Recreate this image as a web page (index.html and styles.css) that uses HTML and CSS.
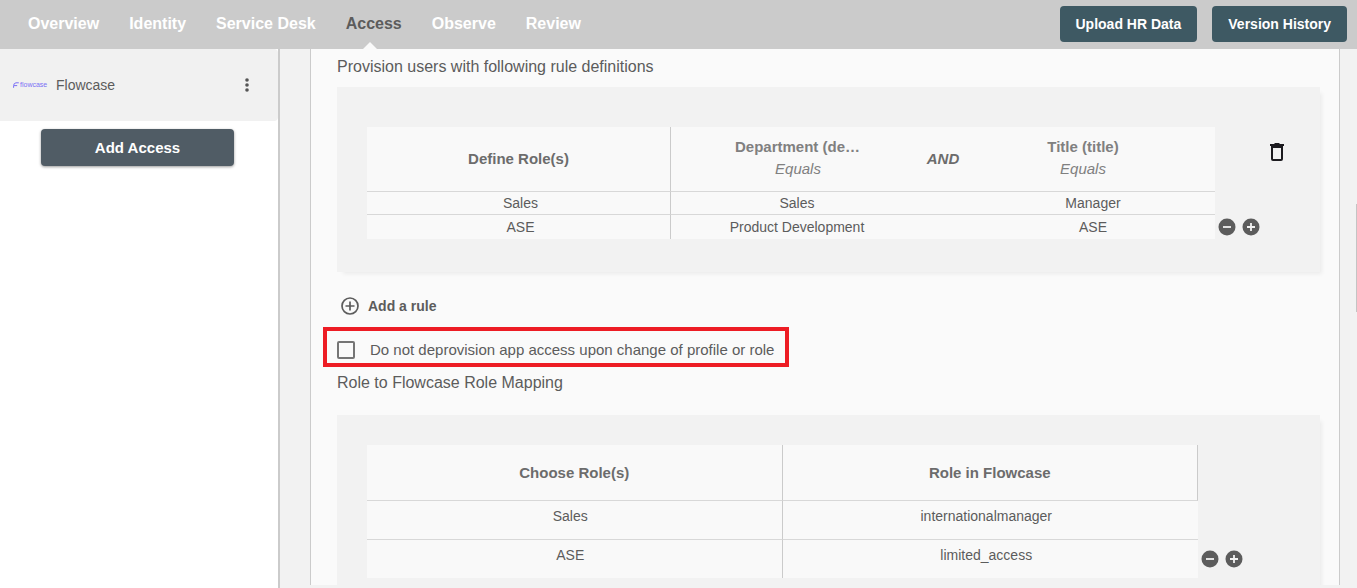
FILE: index.html
```html
<!DOCTYPE html>
<html lang="en">
<head>
<meta charset="utf-8">
<title>Access</title>
<link rel="stylesheet" href="styles.css">
</head>
<body>
<svg class="defs" aria-hidden="true">
  <symbol id="minus" viewBox="0 0 18 18"><circle cx="9" cy="9" r="8.5" fill="#5c5c5c"/><path d="M5 9h8" stroke="#f2f2f2" stroke-width="1.8"/></symbol>
  <symbol id="plus" viewBox="0 0 18 18"><circle cx="9" cy="9" r="8.5" fill="#5c5c5c"/><path d="M5 9h8M9 5v8" stroke="#f2f2f2" stroke-width="1.8"/></symbol>
</svg>
<header class="topbar">
  <nav class="tabs">
    <a class="tab" href="#overview">Overview</a>
    <a class="tab" href="#identity">Identity</a>
    <a class="tab" href="#service-desk">Service Desk</a>
    <a class="tab active" href="#access" aria-current="page">Access</a>
    <a class="tab" href="#observe">Observe</a>
    <a class="tab" href="#review">Review</a>
  </nav>
  <div class="topbar-actions">
    <button class="top-button" type="button">Upload HR Data</button>
    <button class="top-button" type="button">Version History</button>
  </div>
</header>
<div class="layout">
  <aside class="sidebar">
    <div class="app-item">
      <span class="logo"><svg width="6" height="6" viewBox="0 0 6 6" aria-hidden="true"><path d="M.6 5.8V3.500Q.8 1 3 .8h2.800M1 3.600h3.200" fill="none" stroke="#7b70f5"/></svg><span class="logo-text">flowcase</span></span>
      <span class="app-name">Flowcase</span>
      <button class="icon-button" type="button" aria-label="More options"><svg width="16" height="16" viewBox="0 0 16 16"><circle cx="8" cy="3" r="1.800" fill="#555"/><circle cx="8" cy="8" r="1.800" fill="#555"/><circle cx="8" cy="13" r="1.800" fill="#555"/></svg></button>
    </div>
    <button class="add-access" type="button">Add Access</button>
  </aside>
  <main class="content">
    <section class="panel">
      <h2 class="section-title">Provision users with following rule definitions</h2>
      <div class="card rules-card">
        <table class="rules">
          <colgroup><col class="col-role"><col><col class="col-join"><col></colgroup>
          <thead>
            <tr>
              <th>Define Role(s)</th>
              <th class="condition"><span class="field">Department (department)</span><span class="operator">Equals</span></th>
              <th class="join">AND</th>
              <th class="condition last"><span class="field">Title (title)</span><span class="operator">Equals</span></th>
            </tr>
          </thead>
          <tbody>
            <tr><td>Sales</td><td>Sales</td><td></td><td>Manager</td></tr>
            <tr><td>ASE</td><td>Product Development</td><td></td><td>ASE</td></tr>
          </tbody>
        </table>
        <div class="row-actions">
          <button class="icon-button" type="button" aria-label="Remove row"><svg width="18" height="18"><use href="#minus"/></svg></button>
          <button class="icon-button" type="button" aria-label="Add row"><svg width="18" height="18"><use href="#plus"/></svg></button>
        </div>
        <button class="icon-button delete" type="button" aria-label="Delete rule"><svg width="16" height="20" viewBox="0 0 16 20"><path d="M1 2h4l1-1h4l1 1h4v2H1z" fill="#1c1b1f"/><path d="M3 5h10v12q0 1-1 1H4q-1 0-1-1z" fill="none" stroke="#1c1b1f" stroke-width="2"/></svg></button>
      </div>
      <button class="add-rule" type="button"><svg width="18" height="18" viewBox="0 0 18 18" aria-hidden="true"><circle cx="9" cy="9" r="8" fill="none" stroke="#5c5c5c" stroke-width="1.700"/><path d="M4.500 9h9M9 4.500v9" stroke="#5c5c5c" stroke-width="1.700"/></svg>Add a rule</button>
      <label class="deprovision"><input class="checkbox" type="checkbox">Do not deprovision app access upon change of profile or role</label>
      <h2 class="section-title">Role to Flowcase Role Mapping</h2>
      <div class="card mapping-card">
        <table class="mapping">
          <thead><tr><th>Choose Role(s)</th><th>Role in Flowcase</th></tr></thead>
          <tbody>
            <tr><td>Sales</td><td>internationalmanager</td></tr>
            <tr><td>ASE</td><td>limited_access</td></tr>
          </tbody>
        </table>
        <div class="row-actions">
          <button class="icon-button" type="button" aria-label="Remove mapping"><svg width="18" height="18"><use href="#minus"/></svg></button>
          <button class="icon-button" type="button" aria-label="Add mapping"><svg width="18" height="18"><use href="#plus"/></svg></button>
        </div>
      </div>
    </section>
  </main>
</div>
</body>
</html>
```
FILE: styles.css
```css
* { box-sizing: border-box; }
body {
  margin: 0;
  height: 100vh;
  display: flex;
  flex-direction: column;
  overflow: hidden;
  font-family: "Liberation Sans", Arial, sans-serif;
  font-size: 14px;
  color: #5c5c5c;
  background: #fff;
}
button { font: inherit; color: inherit; border: 0; cursor: pointer; }
svg { display: block; }
.defs { position: absolute; width: 0; height: 0; }

.topbar {
  display: flex;
  align-items: stretch;
  justify-content: space-between;
  flex: none;
  height: 49px;
  padding: 0 10px 0 28px;
  background: #cbcbcb;
}
.tabs { display: flex; gap: 30px; }
.tab {
  display: flex;
  align-items: center;
  padding-bottom: 2px;
  font-size: 16px;
  font-weight: 700;
  color: #fff;
  text-decoration: none;
}
.tab.active { position: relative; color: #5c5c5c; }
.tab.active::after {
  content: "";
  position: absolute;
  bottom: 0;
  left: calc(50% - 11px);
  border: 7px solid transparent;
  border-top: 0;
  border-bottom-color: #fafafa;
}
.topbar-actions { display: flex; align-items: center; gap: 15px; padding-bottom: 2px; }
.top-button {
  height: 36px;
  padding: 0 16px;
  border-radius: 4px;
  background: #3e5963;
  color: #fff;
  font-weight: 700;
}

.layout { display: flex; flex: 1; min-height: 0; }
.sidebar {
  flex: none;
  width: 280px;
  border-right: 2px solid #cbcbcb;
}
.app-item {
  display: flex;
  align-items: center;
  height: 72px;
  padding: 0 23px 0 13px;
  border-radius: 0 4px 4px 0;
  background: #f1f1f1;
}
.logo {
  display: flex;
  align-items: center;
  gap: 1px;
  width: 43px;
  color: #7b70f5;
}
.logo-text { font-size: 7px; line-height: 8px; }
.app-name { flex: 1; }
.icon-button { padding: 0; background: none; }
.add-access {
  display: block;
  width: 193px;
  height: 37px;
  margin: 8px 0 0 41px;
  border-radius: 4px;
  background: #505c65;
  box-shadow: 0 1px 3px rgba(0, 0, 0, .4);
  color: #fff;
  font-size: 15px;
  font-weight: 700;
}

.content {
  position: relative;
  display: flex;
  flex: 1;
  min-width: 0;
  padding: 0 17px 3px 30px;
  background: #f2f2f2;
}
.content::after {
  content: "";
  position: absolute;
  top: 155px;
  right: 0;
  width: 1px;
  height: 108px;
  background: #c4c4c4;
}
.panel {
  flex: 1;
  min-width: 0;
  overflow: hidden;
  padding: 8px 19px 0 26px;
  border: solid #cbcbcb;
  border-width: 0 1px;
  background: #fafafa;
}
.section-title {
  margin: 0;
  font-size: 16px;
  line-height: 20px;
  font-weight: 400;
}
.card {
  display: flex;
  background: #f2f2f2;
  box-shadow: 4px 4px 4px -2px rgba(0, 0, 0, .06);
}
.rules-card { margin-top: 10px; padding: 40px 35px 33px 30px; }
.mapping-card { margin-top: 22px; padding: 30px 77px 30px 30px; }
table {
  flex: 1;
  width: 100%;
  min-width: 0;
  table-layout: fixed;
  border-collapse: separate;
  border-spacing: 0;
  background: #f9f9f9;
  text-align: center;
}
th, td { padding: 0; }
th { font-size: 15px; color: #6c6c6c; }
tr > :first-child { border-right: 1px solid #cbcbcb; }
th, tbody tr:not(:last-child) td { border-bottom: 1px solid #d8d8d8; }

.col-role { width: 304px; }
.col-join { width: 48px; }
.rules th { height: 65px; padding-bottom: 2px; }
.rules td { height: 23px; padding-left: 4px; }
.rules tr:last-child td { height: 24px; }
.rules .condition { padding: 0 58px 2px 64px; color: #808080; }
.rules .condition.last { padding: 0 72px 2px 56px; }
.field, .operator { display: block; line-height: 22px; }
.field { overflow: hidden; text-overflow: ellipsis; white-space: nowrap; }
.operator { font-weight: 400; font-style: italic; }
.rules .join { font-style: italic; }

.mapping th { height: 56px; border-right: 1px solid #cbcbcb; }
.mapping td { height: 39px; padding: 0 8px 8px 0; }
.mapping tr:last-child td { height: 38px; }

.row-actions {
  display: flex;
  align-items: flex-end;
  gap: 6px;
  padding: 0 0 3px 3px;
}
.mapping-card .row-actions { padding-bottom: 10px; }
.delete { align-self: flex-start; margin: 15px 0 0 9px; }

.add-rule {
  display: flex;
  align-items: center;
  gap: 9px;
  margin: 24px 0 0 4px;
  padding: 0;
  height: 20px;
  background: none;
  font-weight: 700;
}
.deprovision {
  display: flex;
  align-items: center;
  width: fit-content;
  height: 40px;
  margin: 11px 0 6px -14px;
  padding: 5px 11px 0 10px;
  border: 4px solid #ed1c24;
  font-size: 15px;
}
.checkbox {
  appearance: none;
  width: 18px;
  height: 18px;
  margin: 0 15px 0 0;
  border: 2px solid #757575;
  border-radius: 2px;
}
.checkbox:checked { background: #757575; }
```
